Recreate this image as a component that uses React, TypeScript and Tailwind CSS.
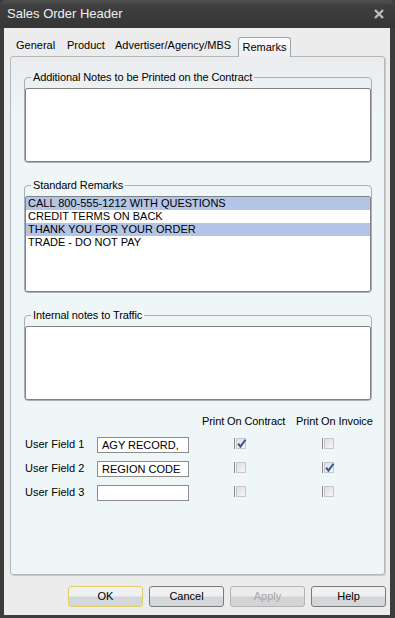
import React from "react";

const remarks = [
    { text: "CALL 800-555-1212 WITH QUESTIONS", sel: true },
    { text: "CREDIT TERMS ON BACK", sel: false },
    { text: "THANK YOU FOR YOUR ORDER", sel: true },
    { text: "TRADE - DO NOT PAY", sel: false },
];

const fields = [
    { label: "User Field 1", value: "AGY RECORD,", contract: true, invoice: false },
    { label: "User Field 2", value: "REGION CODE", contract: false, invoice: true },
    { label: "User Field 3", value: "", contract: false, invoice: false },
];

const Group = ({ label, box, children }: { label: string; box: string; children?: React.ReactNode }) => (
    <fieldset className="border border-[#a9afb4] rounded-[4px] pt-[4px]">
        <legend className="ml-[6px] px-[2px] leading-[13px] tracking-[-0.1px]">{label}</legend>
        <div className={`${box} bg-white border border-[#828282] rounded-[2px] overflow-hidden`}>{children}</div>
    </fieldset>
);

const Check = ({ on }: { on: boolean }) => (
    <div className="flex items-start h-[11px]">
        <div className="w-px h-[11px] bg-[#8a8a8a] mr-px" />
        <div className="relative w-[10px] h-[11px] border border-[#c4c8cc] bg-linear-to-br from-[#dcdcdc] to-[#f8f8f8]">
            {on && (
                <svg viewBox="0 0 10 10" className="absolute -left-px -top-px w-[11px] h-[11px]">
                    <path d="M2 5.2 L4 7.8 L8.6 1.6" fill="none" stroke="#2f4f96" strokeWidth="1.8" />
                </svg>
            )}
        </div>
    </div>
);

const Btn = ({ label, kind }: { label: string; kind?: "focus" | "off" }) => {
    const base = "w-[75px] h-[21px] rounded-[3px] border flex items-center justify-center";
    if (kind === "off")
        return <div className={`${base} border-[#b4b4b4] bg-linear-to-b from-[#ececec] from-45% to-[#d4d4d4] to-55% text-[#a7a7a7]`}>{label}</div>;
    return (
        <div
            className={`${base} ${kind === "focus" ? "border-[#e2cd6c]" : "border-[#7a7a7a]"} bg-linear-to-b from-[#eef0f1] from-45% to-[#d3d7da] to-55% text-black`}
        >
            {label}
        </div>
    );
};

const App = () => {
    return (
        <main className="w-[395px] h-[618px] bg-[#3c3c3c] flex flex-col font-['Liberation_Sans',Arial,sans-serif] text-[11px] text-black">
            <header className="h-[28px] shrink-0 flex items-center justify-between pl-[7px] pr-[11px] bg-linear-to-b from-[#4e4e4e] from-5% via-[#3e3e3e] via-20% to-[#363636] rounded-t-[6px]">
                <span className="text-[13px] text-[#efefef]">Sales Order Header</span>
                <svg viewBox="0 0 10 10" className="w-[10px] h-[10px]">
                    <path d="M1 1 L9 9 M9 1 L1 9" stroke="#bdbdbd" strokeWidth="2.4" />
                </svg>
            </header>

            <section className="flex-1 ml-[4px] mr-[5px] mb-[3px] bg-[#ececec] flex flex-col pl-[6px] pr-[5px] pb-[8px]">
                {/* tabs */}
                <div className="h-[28px] shrink-0 flex items-end">
                    <div className="w-[51px] pl-[6px] leading-[19px] h-[19px] mb-[1px]">General</div>
                    <div className="w-[49px] pl-[6px] leading-[19px] h-[19px] mb-[1px]">Product</div>
                    <div className="w-[128px] pl-[5px] leading-[19px] h-[19px] mb-[1px]">Advertiser/Agency/MBS</div>
                    <div className="relative z-10 -mb-px w-[53px] h-[20px] leading-[18px] text-center border border-b-0 border-[#9ea4a9] rounded-t-[3px] bg-linear-to-b from-[#fbfcfd] to-[#eceef0]">
                        Remarks
                    </div>
                </div>

                {/* panel */}
                <div className="flex-1 border border-[#b2b7bb] rounded-[3px] shadow-[1px_1px_0_#c9cbcd] bg-linear-to-b from-[#eaecee] to-[#eff6f8] to-[12%] pl-[13px] pr-[12px] flex flex-col">
                    <div className="mt-[14px]">
                        <Group label="Additional Notes to be Printed on the Contract" box="h-[74px]" />
                    </div>
                    <div className="mt-[16px]">
                        <Group label="Standard Remarks" box="h-[96px]">
                            {remarks.map((r) => (
                                <div key={r.text} className={`h-[13px] leading-[13px] pl-[2px] ${r.sel ? "bg-[#b3c5e7]" : ""}`}>
                                    {r.text}
                                </div>
                            ))}
                        </Group>
                    </div>
                    <div className="mt-[16px]">
                        <Group label="Internal notes to Traffic" box="h-[74px]" />
                    </div>

                    <div className="mt-[14px] flex leading-[13px] whitespace-nowrap tracking-[-0.1px]">
                        <div className="w-[178px] shrink-0" />
                        <div className="w-[94px] shrink-0">Print On Contract</div>
                        <div className="shrink-0">Print On Invoice</div>
                    </div>

                    <div className="mt-[9px] flex flex-col gap-[8px]">
                        {fields.map((f) => (
                            <div key={f.label} className="flex items-start">
                                <div className="w-[73px] pl-px leading-[14px]">{f.label}</div>
                                <div className="w-[92px] h-[16px] border border-[#8c8c8c] bg-white pl-[4px] leading-[14px] whitespace-nowrap overflow-hidden">
                                    {f.value}
                                </div>
                                <div className="ml-[45px] mt-px">
                                    <Check on={f.contract} />
                                </div>
                                <div className="ml-[76px] mt-px">
                                    <Check on={f.invoice} />
                                </div>
                            </div>
                        ))}
                    </div>
                </div>

                {/* buttons */}
                <div className="mt-[11px] flex justify-end gap-[6px] pr-px -mr-[2px]">
                    <Btn label="OK" kind="focus" />
                    <Btn label="Cancel" />
                    <Btn label="Apply" kind="off" />
                    <Btn label="Help" />
                </div>
            </section>
        </main>
    );
};

export default App;
